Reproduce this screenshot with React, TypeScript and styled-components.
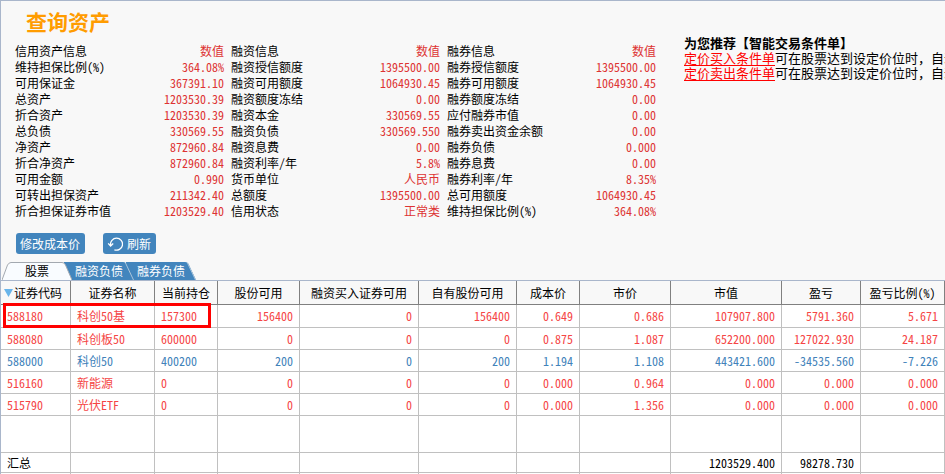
import React, { useState } from "react";
import styled, { createGlobalStyle } from "styled-components";

const GlobalStyle = createGlobalStyle`
  *, *::before, *::after { box-sizing: border-box; }
  html, body { margin: 0; padding: 0; background: #f8f8f8; overflow: hidden; }
  body, button, table {
    font-family: "Noto Sans CJK SC", "Liberation Sans", sans-serif;
    font-size: 12px;
    font-feature-settings: "hwid";
  }
`;

const Page = styled.main`
  height: 100vh;
  overflow: hidden;
  border-top: 1px solid #a9b6cb;
  border-left: 1px solid #a9b6cb;
  background: #f8f8f8;
  color: #000;
`;

const Summary = styled.section`
  display: flex;
  gap: 28px;
  padding: 8px 0 0 14px;
`;

const Account = styled.div`
  flex: 0 0 auto;
`;

const Title = styled.h1`
  margin: 0 0 10px 11px;
  font-size: 21px;
  line-height: 24px;
  font-weight: 700;
  color: #ff9c00;
`;

const Groups = styled.div`
  display: flex;
  gap: 7px;
`;

const Group = styled.table`
  width: 209px;
  border-collapse: collapse;
  line-height: 16px;

  th, td { padding: 0; height: 16px; font-weight: 400; white-space: nowrap; }
  th { text-align: left; }
  td, thead th:last-child { text-align: right; color: #dd3333; }
`;

const Promo = styled.aside`
  flex: 1;
  min-width: 0;
  padding-top: 27px;
  overflow: hidden;
  white-space: nowrap;
  font-family: "Liberation Sans", "Noto Sans CJK SC", sans-serif;
  font-feature-settings: normal;
  font-size: 13px;
  line-height: 15px;
`;

const PromoTitle = styled.h2`
  margin: 0;
  font-size: 13px;
  line-height: 15px;
  font-weight: 700;
`;

const PromoLine = styled.p`
  margin: 0;
`;

const PromoLink = styled.a`
  color: #ff0000;
  text-decoration: underline;
  text-underline-offset: 2px;
`;

const Actions = styled.div`
  display: flex;
  gap: 18px;
  padding: 14px 0 8px 15px;
`;

const ActionButton = styled.button`
  display: flex;
  align-items: center;
  gap: 4px;
  height: 21px;
  padding: 0 5px 0 4px;
  border: 0;
  border-radius: 3px;
  background: #4285bd;
  color: #fff;
  line-height: 20px;
  white-space: nowrap;
`;

const TabBar = styled.div`
  display: flex;
  height: 18px;
  padding-left: 1px;
`;

const TabButton = styled.button<{ $active: boolean; $layer: number }>`
  position: relative;
  z-index: ${(p) => p.$layer};
  height: 18px;
  width: 70px;
  padding: 0;
  border: 0;
  background: none;
  color: ${(p) => (p.$active ? "#000" : "#fff")};
  line-height: 18px;

  & + & { margin-left: -8px; }
`;

const TabShape = styled.svg`
  position: absolute;
  inset: 0;
  z-index: -1;
`;

const TableArea = styled.section`
  position: relative;
`;

const Holdings = styled.table`
  width: 100%;
  table-layout: fixed;
  border-collapse: separate;
  border-spacing: 0;
  border-top: 1px solid #a9b6cb;
  background: #fff;
`;

const Col = styled.col<{ $width?: number }>`
  width: ${(p) => (p.$width ? `${p.$width}px` : "auto")};
`;

const HeadCell = styled.th`
  height: 24px;
  padding: 0 3px;
  border-right: 1px solid #808080;
  border-bottom: 1px solid #808080;
  background: #f8f8f8;
  font-weight: 400;
  line-height: 20px;
  white-space: nowrap;
`;

const HeadLabel = styled.span<{ $sorted: boolean }>`
  display: flex;
  align-items: center;
  justify-content: ${(p) => (p.$sorted ? "flex-start" : "center")};
  gap: 1px;
`;

const Row = styled.tr<{ $tone?: "up" | "down"; $height?: number }>`
  height: ${(p) => p.$height ?? 22}px;
  color: ${(p) => (p.$tone === "up" ? "#f54545" : p.$tone === "down" ? "#4182ba" : "#000")};
`;

const Cell = styled.td<{ $left?: boolean }>`
  padding: 0 6px;
  border-right: 1px solid #c0c0c0;
  border-bottom: 1px solid #c0c0c0;
  text-align: ${(p) => (p.$left ? "left" : "right")};
  line-height: 18px;
  white-space: nowrap;
`;

const Highlight = styled.div`
  position: absolute;
  top: 23px;
  left: 2px;
  width: 208px;
  height: 25px;
  border: 3px solid #ff0000;
  pointer-events: none;
`;

type Pair = [string, string];

const groups: Pair[][] = [
  [
    ["信用资产信息", "数值"],
    ["维持担保比例(%)", "364.08%"],
    ["可用保证金", "367391.10"],
    ["总资产", "1203530.39"],
    ["折合资产", "1203530.39"],
    ["总负债", "330569.55"],
    ["净资产", "872960.84"],
    ["折合净资产", "872960.84"],
    ["可用金额", "0.990"],
    ["可转出担保资产", "211342.40"],
    ["折合担保证券市值", "1203529.40"],
  ],
  [
    ["融资信息", "数值"],
    ["融资授信额度", "1395500.00"],
    ["融资可用额度", "1064930.45"],
    ["融资额度冻结", "0.00"],
    ["融资本金", "330569.55"],
    ["融资负债", "330569.550"],
    ["融资息费", "0.00"],
    ["融资利率/年", "5.8%"],
    ["货币单位", "人民币"],
    ["总额度", "1395500.00"],
    ["信用状态", "正常类"],
  ],
  [
    ["融券信息", "数值"],
    ["融券授信额度", "1395500.00"],
    ["融券可用额度", "1064930.45"],
    ["融券额度冻结", "0.00"],
    ["应付融券市值", "0.00"],
    ["融券卖出资金余额", "0.00"],
    ["融券负债", "0.000"],
    ["融券息费", "0.00"],
    ["融券利率/年", "8.35%"],
    ["总可用额度", "1064930.45"],
    ["维持担保比例(%)", "364.08%"],
  ],
];

const columns: { label: string; width?: number }[] = [
  { label: "证券代码", width: 70 },
  { label: "证券名称", width: 84 },
  { label: "当前持仓", width: 63 },
  { label: "股份可用", width: 82 },
  { label: "融资买入证券可用", width: 119 },
  { label: "自有股份可用", width: 98 },
  { label: "成本价", width: 63 },
  { label: "市价", width: 91 },
  { label: "市值", width: 111 },
  { label: "盈亏", width: 79 },
  { label: "盈亏比例(%)" },
];

const holdings: { tone: "up" | "down"; cells: string[] }[] = [
  { tone: "up", cells: ["588180", "科创50基", "157300", "156400", "0", "156400", "0.649", "0.686", "107907.800", "5791.360", "5.671"] },
  { tone: "up", cells: ["588080", "科创板50", "600000", "0", "0", "0", "0.875", "1.087", "652200.000", "127022.930", "24.187"] },
  { tone: "down", cells: ["588000", "科创50", "400200", "200", "0", "200", "1.194", "1.108", "443421.600", "-34535.560", "-7.226"] },
  { tone: "up", cells: ["516160", "新能源", "0", "0", "0", "0", "0.000", "0.964", "0.000", "0.000", "0.000"] },
  { tone: "up", cells: ["515790", "光伏ETF", "0", "0", "0", "0", "0.000", "1.356", "0.000", "0.000", "0.000"] },
];

const totals = ["汇总", "", "", "", "", "", "", "", "1203529.400", "98278.730", ""];
const blank = columns.map(() => "");
const tabs = ["股票", "融资负债", "融券负债"];

function RefreshIcon() {
  return (
    <svg width="16" height="16" viewBox="0 0 16 16" fill="none" stroke="#fff" strokeWidth="1.3" aria-hidden="true">
      <path d="M3.6 9.2A6 6 0 1 1 7.4 13.8" />
      <path d="M1.2 7.4 3.6 10 6.2 7.6" />
    </svg>
  );
}

function Tab({ label, active, layer, onSelect }: { label: string; active: boolean; layer: number; onSelect: () => void }) {
  return (
    <TabButton type="button" role="tab" aria-selected={active} $active={active} $layer={layer} onClick={onSelect}>
      <TabShape width="70" height="18" viewBox="0 0 70 18" aria-hidden="true">
        <path
          d={active ? "M0 18 L5.5 3 Q7 0.5 9 0.5 H60 Q62.5 0.5 63.5 3 L70 18" : "M0 18 V0 H59 Q62 0 63 3 L70 18 Z"}
          fill={active ? "#f9fcff" : "#4285bd"}
          stroke={active ? "#a3a9b0" : "none"}
        />
        {!active && <path d="M61.5 1 L69.5 18" fill="none" stroke="#a9c4da" />}
      </TabShape>
      {label}
    </TabButton>
  );
}

function DataRow({ cells, tone, height }: { cells: string[]; tone?: "up" | "down"; height?: number }) {
  return (
    <Row $tone={tone} $height={height}>
      {cells.map((value, i) => (
        <Cell key={i} $left={i < 3}>{value}</Cell>
      ))}
    </Row>
  );
}

export default function App() {
  const [active, setActive] = useState(0);
  return (
    <>
      <GlobalStyle />
      <Page>
        <Summary>
          <Account>
            <Title>查询资产</Title>
            <Groups>
              {groups.map(([head, ...rows], g) => (
                <Group key={g}>
                  <thead>
                    <tr><th scope="col">{head[0]}</th><th scope="col">{head[1]}</th></tr>
                  </thead>
                  <tbody>
                    {rows.map(([label, value]) => (
                      <tr key={label}><th scope="row">{label}</th><td>{value}</td></tr>
                    ))}
                  </tbody>
                </Group>
              ))}
            </Groups>
          </Account>
          <Promo>
            <PromoTitle>为您推荐【智能交易条件单】</PromoTitle>
            <PromoLine><PromoLink href="#buy">定价买入条件单</PromoLink>可在股票达到设定价位时，自动</PromoLine>
            <PromoLine><PromoLink href="#sell">定价卖出条件单</PromoLink>可在股票达到设定价位时，自动</PromoLine>
          </Promo>
        </Summary>
        <Actions>
          <ActionButton type="button">修改成本价</ActionButton>
          <ActionButton type="button"><RefreshIcon />刷新</ActionButton>
        </Actions>
        <TabBar role="tablist">
          {tabs.map((label, i) => (
            <Tab
              key={label}
              label={label}
              active={i === active}
              layer={i === active ? tabs.length + 1 : tabs.length - i}
              onSelect={() => setActive(i)}
            />
          ))}
        </TabBar>
        <TableArea>
          <Holdings>
            <colgroup>
              {columns.map((c) => <Col key={c.label} $width={c.width} />)}
            </colgroup>
            <thead>
              <tr>
                {columns.map((c, i) => (
                  <HeadCell key={c.label} scope="col">
                    <HeadLabel $sorted={i === 0}>
                      {i === 0 && (
                        <svg width="9" height="8" viewBox="0 0 9 8" aria-hidden="true">
                          <path d="M0 0H9L4.5 8Z" fill="#68b4ea" />
                        </svg>
                      )}
                      {c.label}
                    </HeadLabel>
                  </HeadCell>
                ))}
              </tr>
            </thead>
            <tbody>
              {holdings.map((h, i) => (
                <DataRow key={h.cells[0]} cells={h.cells} tone={h.tone} height={i === 0 ? 23 : 22} />
              ))}
              <DataRow cells={blank} height={37} />
              <DataRow cells={totals} height={20} />
              <DataRow cells={blank} />
            </tbody>
          </Holdings>
          <Highlight />
        </TableArea>
      </Page>
    </>
  );
}
